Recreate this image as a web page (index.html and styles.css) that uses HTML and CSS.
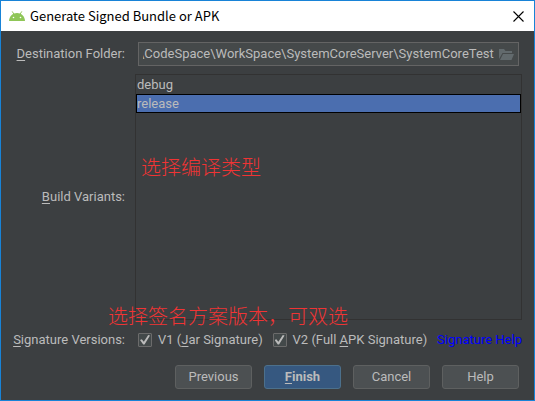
FILE: index.html
```html
<!DOCTYPE html>
<html lang="en">
<head>
<meta charset="utf-8">
<title>Generate Signed Bundle or APK</title>
<link rel="stylesheet" href="styles.css">
</head>
<body>
<main class="dialog">
  <header class="titlebar">
    <svg class="robot" viewBox="0 0 16 10" aria-hidden="true">
      <path d="M3.200 .4 4.800 3M12.800 .4 11.200 3" stroke="#8bc34a" stroke-width=".9"/>
      <path d="M0 10C.3 5.200 3.500 2 8 2s7.700 3.200 8 8z" fill="#8fc657"/>
      <circle cx="4.500" cy="6.500" r=".8" fill="#fff"/>
      <circle cx="11.500" cy="6.500" r=".8" fill="#fff"/>
    </svg>
    <h1 class="title">Generate Signed Bundle or APK</h1>
    <button class="close" type="button" aria-label="Close">
      <svg viewBox="0 0 11 11" aria-hidden="true"><path d="M.5 .5 10.500 10.500M10.500 .5 .5 10.500" stroke="#000" stroke-width="1.100"/></svg>
    </button>
  </header>
  <form class="form">
    <label class="label" for="folder"><u>D</u>estination Folder:</label>
    <div class="path">
      <input class="path-input" id="folder" type="text" value="\CodeSpace\WorkSpace\SystemCoreServer\SystemCoreTest">
      <button class="browse" type="button" aria-label="Browse">
        <svg viewBox="0 0 15 11" aria-hidden="true"><path d="M0 10V0h5l1.500 2H13v2H3.500z" fill="#626a6d"/><path d="M4 5h11l-2.500 6H1z" fill="#626a6d"/></svg>
      </button>
    </div>
    <label class="label" for="variants"><u>B</u>uild Variants:</label>
    <div class="variants">
      <select class="list" id="variants" size="12">
        <option>debug</option>
        <option selected>release</option>
      </select>
      <p class="note note-type" lang="zh">选择编译类型</p>
      <p class="note note-version" lang="zh">选择签名方案版本，可双选</p>
    </div>
    <span class="label" id="versions"><u>S</u>ignature Versions:</span>
    <div class="versions" role="group" aria-labelledby="versions">
      <label class="check"><input type="checkbox" checked><span>V1 (<u>J</u>ar Signature)</span></label>
      <label class="check"><input type="checkbox" checked><span>V2 (Full <u>A</u>PK Signature)</span></label>
      <a class="help" href="#help">Signature Help</a>
    </div>
    <footer class="actions">
      <button class="button" type="button">Previous</button>
      <button class="button primary" type="submit"><u>F</u>inish</button>
      <button class="button" type="button">Cancel</button>
      <button class="button" type="button">Help</button>
    </footer>
  </form>
</main>
</body>
</html>
```
FILE: styles.css
```css
* { box-sizing: border-box; }

body {
  margin: 0;
  background: #3c3f41;
  color: #bbb;
  font: 13px/18px Roboto, "Noto Sans CJK SC", sans-serif;
}

input, select, button { font: inherit; color: inherit; }

u { text-underline-offset: 2px; text-decoration-thickness: 1px; }

.dialog {
  display: flex;
  flex-direction: column;
  min-height: 100vh;
  border: 1px solid #1883d7;
}

.titlebar {
  display: flex;
  align-items: center;
  gap: 5px;
  height: 30px;
  padding: 0 10px 0 8px;
  background: #fff;
  color: #000;
}

.robot { width: 16px; height: 10px; fill: none; }

.title {
  flex: 1;
  margin: 0;
  font: 400 13px/18px "Noto Sans CJK SC", sans-serif;
}

.close {
  display: flex;
  padding: 0;
  border: 0;
  background: none;
}
.close svg { width: 11px; height: 11px; }

.form {
  flex: 1;
  display: grid;
  grid-template-columns: 112px minmax(0, 1fr);
  grid-template-rows: auto 1fr auto auto;
  column-gap: 10px;
  padding: 11px 12px;
}

.label {
  align-self: center;
  justify-self: end;
  white-space: nowrap;
}

.path {
  display: flex;
  align-items: center;
  height: 24px;
  margin: 0 3px 8px;
  padding: 0 4px;
  border: 1px solid #646464;
  background: #45494a;
}
.form > .label:first-child { margin-bottom: 8px; }

.path-input {
  flex: 1;
  min-width: 0;
  padding: 0;
  border: 0;
  outline: 0;
  background: none;
  text-indent: -4px;
}

.browse {
  display: flex;
  padding: 0;
  margin-left: 4px;
  border: 0;
  background: none;
}
.browse svg { width: 15px; height: 11px; }

.variants { position: relative; display: flex; min-height: 0; }

.list {
  flex: 1;
  min-width: 0;
  padding: 0;
  border: 1px solid #323232;
  border-radius: 0;
  outline: 0;
  background: #3c3f41;
  overflow: hidden;
}
.list option {
  height: 19px;
  min-height: 19px;
  padding: 2px 1px 0;
  line-height: 17px;
}
.list option:checked {
  padding: 1px 0 0;
  border: 1px solid #000;
  background: #4b6eaf linear-gradient(#4b6eaf, #4b6eaf);
  color: #bbb;
}

.note {
  position: absolute;
  margin: 0;
  color: #f03434;
  font: 300 20px/24px "Noto Sans CJK SC", sans-serif;
  white-space: nowrap;
  pointer-events: none;
}
.note-type { top: 81px; left: 6px; }
.note-version { bottom: -8px; left: -27px; }

.versions {
  display: flex;
  align-items: center;
  justify-content: space-between;
  height: 40px;
  padding-left: 3px;
  white-space: nowrap;
}

.check { display: flex; align-items: center; gap: 6px; }
.check input {
  appearance: none;
  width: 14px;
  height: 14px;
  margin: 0;
  border: 1px solid #6b6b6b;
  border-radius: 1px;
  background: #43494a;
  display: grid;
  place-items: center;
}
.check input:checked::before {
  content: "";
  width: 10px;
  height: 10px;
  background: #bbb;
  clip-path: polygon(0 50%, 18% 42%, 38% 68%, 82% 0, 100% 6%, 45% 96%, 32% 96%);
}

.help { color: #00f; text-decoration: none; }

.actions {
  grid-column: 1 / -1;
  display: flex;
  justify-content: flex-end;
  gap: 12px;
  padding: 5px 3px 0;
}

.button {
  width: 77px;
  height: 24px;
  padding: 0;
  border: 1px solid #5e6060;
  border-radius: 3px;
  background: #4c5052;
}
.primary {
  border-color: #4c708c;
  background: #365880;
  font-weight: 700;
}
```
